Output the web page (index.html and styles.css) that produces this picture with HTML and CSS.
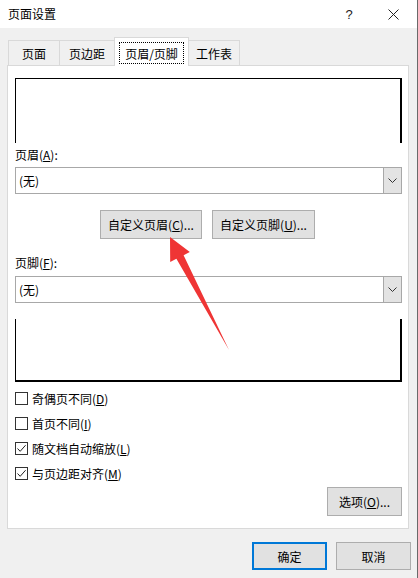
FILE: index.html
```html
<!DOCTYPE html>
<html lang="zh-CN">
<head>
<meta charset="utf-8">
<title>页面设置</title>
<link rel="stylesheet" href="styles.css">
</head>
<body>
<div class="dialog">
  <div class="titlebar">
    <span class="title">页面设置</span>
    <span class="help">?</span>
    <svg class="close" width="11" height="11" viewBox="0 0 11 11"><path d="M0.5 0.5 L10.5 10.5 M10.5 0.5 L0.5 10.5" stroke="#222" stroke-width="1"/></svg>
  </div>

  <div class="tabstrip">
    <div class="tab t1">页面</div>
    <div class="tab t2">页边距</div>
    <div class="tab t3 active"><span class="focus">页眉/页脚</span></div>
    <div class="tab t4">工作表</div>
  </div>

  <div class="panel">
    <div class="preview preview-head"></div>

    <div class="label">页眉(<u>A</u>):</div>
    <div class="combo">
      <span class="combo-text">(无)</span>
      <span class="combo-btn"><svg width="9" height="5" viewBox="0 0 9 5"><path d="M0.5 0.5 L4.5 4.5 L8.5 0.5" fill="none" stroke="#333" stroke-width="1"/></svg></span>
    </div>

    <div class="btnrow">
      <div class="btn custom-head">自定义页眉(<u>C</u>)...</div>
      <div class="btn custom-foot">自定义页脚(<u>U</u>)...</div>
    </div>

    <div class="label label-foot">页脚(<u>F</u>):</div>
    <div class="combo">
      <span class="combo-text">(无)</span>
      <span class="combo-btn"><svg width="9" height="5" viewBox="0 0 9 5"><path d="M0.5 0.5 L4.5 4.5 L8.5 0.5" fill="none" stroke="#333" stroke-width="1"/></svg></span>
    </div>

    <div class="preview preview-foot"></div>

    <div class="checks">
      <div class="check"><span class="box"></span>奇偶页不同(<u>D</u>)</div>
      <div class="check"><span class="box"></span>首页不同(<u>I</u>)</div>
      <div class="check"><span class="box"><svg width="11" height="11" viewBox="0 0 11 11"><path d="M1.5 5.5 L4.2 8.3 L9.6 2.2" fill="none" stroke="#222" stroke-width="1"/></svg></span>随文档自动缩放(<u>L</u>)</div>
      <div class="check"><span class="box"><svg width="11" height="11" viewBox="0 0 11 11"><path d="M1.5 5.5 L4.2 8.3 L9.6 2.2" fill="none" stroke="#222" stroke-width="1"/></svg></span>与页边距对齐(<u>M</u>)</div>
    </div>

    <div class="optrow">
      <div class="btn options">选项(<u>O</u>)...</div>
    </div>
  </div>

  <div class="footer">
    <div class="btn ok">确定</div>
    <div class="btn cancel">取消</div>
  </div>
</div>

<svg class="arrow" width="418" height="578" viewBox="0 0 418 578">
  <polygon points="170,237 189.8,252 183.6,255.2 229,350 176.4,258.8 170.2,262" fill="#ef3535"/>
</svg>
</body>
</html>
```

FILE: styles.css
```css
html, body {
  margin: 0;
  padding: 0;
}
body {
  width: 418px;
  height: 578px;
  overflow: hidden;
  background: #f0f0f0;
  font-family: "Noto Sans CJK SC", "Noto Sans", sans-serif;
  font-size: 12px;
  color: #000;
  position: relative;
}
u {
  text-decoration: underline;
  text-underline-offset: 1px;
}
.dialog {
  width: 418px;
  height: 578px;
  box-sizing: border-box;
  border-right: 1px solid #6a6a6a;
}
.titlebar {
  height: 28px;
  background: #fff;
  display: flex;
  align-items: center;
  padding-left: 8px;
}
.title {
  flex: 1;
  line-height: 28px;
}
.help {
  width: 12px;
  text-align: center;
  margin-right: 33px;
  font-family: "Liberation Sans", sans-serif;
  font-size: 13px;
  color: #222;
}
.close {
  margin-right: 18px;
}
.tabstrip {
  height: 37px;
  display: flex;
  align-items: flex-end;
  padding-left: 8px;
}
.tab {
  height: 25px;
  box-sizing: border-box;
  border: 1px solid #d9d9d9;
  border-bottom: none;
  background: #f0f0f0;
  display: flex;
  align-items: center;
  justify-content: center;
  margin-left: -1px;
}
.t1 { width: 52px; margin-left: 0; }
.t2 { width: 56px; }
.t3 { width: 75px; }
.t4 { width: 52px; }
.tab.active {
  height: 29px;
  margin-bottom: -1px;
  background: #fff;
  position: relative;
  z-index: 1;
  align-items: flex-end;
  padding-bottom: 2px;
}
.focus {
  width: 63px;
  height: 20px;
  border: 1px dotted #000;
  display: flex;
  align-items: center;
  justify-content: center;
}
.panel {
  margin-left: 7px;
  width: 402px;
  height: 464px;
  box-sizing: border-box;
  border: 1px solid #d9d9d9;
  background: #fff;
  padding: 12px 6px 0 7px;
}
.preview {
  box-sizing: border-box;
  border-left: 1px solid #000;
  border-right: 2px solid #000;
}
.preview-head {
  height: 65px;
  border-top: 1px solid #000;
}
.preview-foot {
  height: 63px;
  margin-top: 16px;
  border-bottom: 2px solid #000;
}
.label {
  height: 24px;
  line-height: 24px;
}
.label-foot {
  margin-top: 11px;
  height: 26px;
  line-height: 26px;
}
.combo {
  height: 27px;
  box-sizing: border-box;
  border: 1px solid #a8a8a8;
  display: flex;
  align-items: stretch;
}
.combo-text {
  flex: 1;
  padding-left: 3px;
  line-height: 25px;
}
.combo-btn {
  width: 17px;
  background: #e3e3e3;
  border-left: 1px solid #a8a8a8;
  display: flex;
  align-items: center;
  justify-content: center;
}
.btnrow {
  margin-top: 16px;
  display: flex;
  padding-left: 85px;
  gap: 10px;
}
.btn {
  box-sizing: border-box;
  background: #e1e1e1;
  border: 1px solid #adadad;
  display: flex;
  align-items: center;
  justify-content: center;
}
.custom-head {
  width: 102px;
  height: 29px;
}
.custom-foot {
  width: 103px;
  height: 29px;
}
.checks {
  margin-top: 4px;
  display: flex;
  flex-direction: column;
}
.check {
  height: 25px;
  display: flex;
  align-items: center;
}
.box {
  width: 13px;
  height: 13px;
  box-sizing: border-box;
  border: 1px solid #333;
  background: #fff;
  margin-right: 4px;
  display: flex;
  align-items: center;
  justify-content: center;
}
.optrow {
  margin-top: 1px;
  display: flex;
  justify-content: flex-end;
}
.options {
  width: 75px;
  height: 29px;
}
.footer {
  margin-top: 13px;
  display: flex;
  justify-content: flex-end;
  gap: 9px;
  padding-right: 6px;
}
.ok, .cancel {
  width: 75px;
  height: 28px;
}
.ok {
  border: 2px solid #0078d7;
}
.arrow {
  position: absolute;
  left: 0;
  top: 0;
  pointer-events: none;
}
```
